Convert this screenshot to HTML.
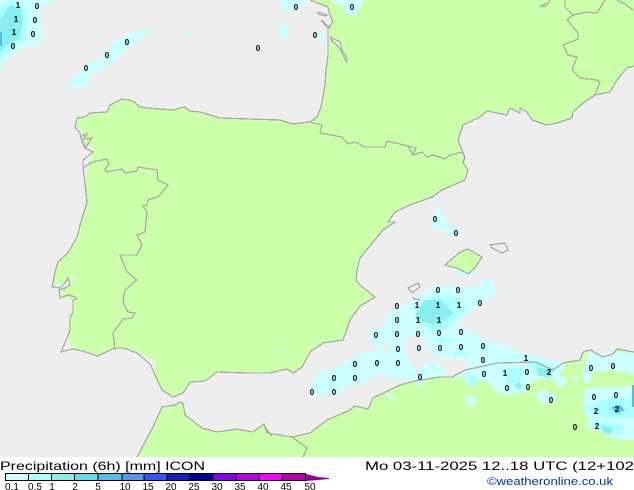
<!DOCTYPE html>
<html><head><meta charset="utf-8"><style>
html,body{margin:0;padding:0;background:#fff;width:634px;height:490px;overflow:hidden}
svg{display:block}
text{font-family:"Liberation Sans",sans-serif}
.m text{font-size:8px;font-weight:bold;text-anchor:middle;fill:#000}
.l text{font-size:10px;text-anchor:middle;fill:#000}
</style></head><body>
<svg width="634" height="490" viewBox="0 0 634 490" xmlns="http://www.w3.org/2000/svg">
<rect width="634" height="490" fill="#fff"/>
<rect width="634" height="457" fill="#eeeeee"/>
<g shape-rendering="crispEdges">
<!-- land -->
<g fill="#ccffaa">
<polygon points="310,0 634,0 634,66 627,68 617,80 610,92 595,95 583,103 573,112 572,118 557,123 547,125 532,120 527,112 520,108 520,113 510,108 507,115 487,111 480,117 463,125 458,140 462,150 465,157 463,163 468,170 465,180 442,190 432,197 410,205 395,212 388,222 395,222 383,230 360,258 357,270 356,280 360,285 375,297 360,306 350,320 346,332 343,340 323,343 310,352 302,367 293,373 287,369 270,373 247,373 217,372 205,381 190,382 183,393 173,397 162,390 153,378 157,362 132,350 137,353 123,348 113,350 97,356 85,351 72,349 70,340 68,320 73,305 73,300 60,298 59,290 68,287 70,284 77,275 63,282 52,287 55,272 58,262 68,253 77,237 82,218 87,203 85,183 90,160 93,152 94,148 85,145 82,130 75,127 77,118 85,117 90,113 107,112 110,105 122,99 133,101 140,107 147,108 173,110 184,107 190,111 200,112 220,118 280,120 292,124 310,122 317,117 321,107 325,85 328,55 328,36 328,28 333,22 331,18 328,7"/>
<polygon points="137,457 153,427 162,407 175,405 180,402 183,403 185,415 202,428 217,432 237,429 253,432 264,424 267,433 292,437 310,433 327,420 350,410 355,406 368,409 373,398 400,385 415,381 440,377 452,377 465,370 498,363 535,362 553,370 563,363 580,360 583,352 590,350 603,357 613,354 617,349 634,352 634,457"/>
<polygon points="445,265 460,252 468,249 482,257 475,268 468,274 457,268"/>
</g>
<polygon points="331,38 341,43 343,52 348,63 341,50 338,46" fill="#eeeeee"/>
<!-- lightest precip -->
<g fill="#ccffff">
<polygon points="0,0 55,0 40,7 43,33 42,43 20,50 3,63 0,73"/>
<polygon points="63,92 68,85 73,78 87,65 103,57 113,42 130,33 147,28 153,32 140,40 128,48 117,60 93,73 83,90 75,88 72,83 65,93"/>
<polygon points="185,32 188,29 191,33 188,36"/>
<polygon points="280,0 306,0 305,7 285,12"/>
<polygon points="333,0 363,0 362,5 355,17 345,13 343,5 333,3"/>
<polygon points="280,23 288,24 290,32 283,40 280,38"/>
<polygon points="317,33 325,33 325,38 317,39"/>
<polygon points="430,228 432,216 440,206 443,215 448,225 455,225 460,233 455,238 445,230"/>
<polygon points="456,268 468,274 475,268 470,276 460,276"/>
<polygon points="370,328 383,328 389,313 410,302 415,297 425,294 433,285 457,287 477,287 482,280 492,280 497,293 492,297 473,310 463,318 457,328 467,330 487,340 510,347 527,355 540,357 567,363 560,373 568,383 560,387 550,378 537,380 530,383 525,393 507,395 497,393 490,383 480,380 473,388 467,383 460,377 447,376 440,376 425,379 421,389 417,382 413,380 387,378 380,372 367,383 343,388 340,395 310,395 310,387 318,373 333,370 350,360 362,353 375,353 376,348 370,337"/>
<polygon points="584,390 587,388 613,387 634,387 634,440 617,440 600,432 585,427 590,422 583,408"/>
<polygon points="465,397 470,395 476,400 474,406 468,406"/>
<polygon points="535,393 543,390 557,396 555,402 545,405 538,400"/>
<polygon points="572,378 576,375 579,379 575,382"/>
<polygon points="583,368 586,365 588,350 600,357 613,354 620,352 634,353 634,376 625,372 606,370 592,373 590,383 584,383"/>
<polygon points="278,349 280,352 277,354 275,351"/>
<polygon points="387,395 391,393 394,397 390,400"/>
</g>
<!-- gaps in rain over sea -->
<g fill="#eeeeee">
<polygon points="402,341 413,335 423,338 432,353 440,359 450,358 467,360 468,368 463,372 447,377 438,370 427,362 423,367 417,373 408,357 404,353 403,345"/>
<polygon points="382,345 390,342 392,353 384,353"/>
</g>
<g fill="#ccffff">
<polygon points="426,362 437,363 447,373 437,377 428,375"/>
<polygon points="415,347 422,346 423,352 416,353"/>
</g>
<!-- mid precip -->
<g fill="#aaffff">
<polygon points="0,8 13,0 25,7 27,20 25,40 13,47 0,60"/>
<polygon points="415,317 423,302 440,295 458,298 467,312 443,328 435,335 427,328"/>
<polygon points="438,337 457,340 455,342 440,343"/>
<polygon points="452,352 467,351 468,354 455,355"/>
<polygon points="503,368 520,368 527,372 515,387 507,383"/>
<polygon points="530,357 543,363 557,368 550,378 537,375 530,367"/>
<polygon points="468,375 478,378 474,387 470,386"/>
<polygon points="583,408 597,402 617,397 634,400 634,418 617,418 600,417"/>
<polygon points="590,424 600,420 625,426 620,436 606,432"/>
</g>
<!-- darker precip -->
<g fill="#88eeee">
<polygon points="0,20 10,5 22,10 22,25 20,38 8,44 0,52"/>
<polygon points="415,315 425,300 440,300 453,313 437,325 420,322"/>
<polygon points="537,367 550,370 553,375 547,378 538,375"/>
<polygon points="515,385 519,381 522,387 518,390"/>
<polygon points="608,408 617,405 627,410 617,415"/>
<polygon points="600,425 612,428 610,435 604,433"/>
</g>
<g fill="#55bbee">
<rect x="0" y="32" width="2" height="14"/>
<rect x="632" y="385" width="2" height="22"/>
<polygon points="612,407 620,405 624,410 616,413"/>
</g>
<!-- coast and borders -->
<g fill="none" stroke="#aaaaaa" stroke-width="1.3">
<polyline points="310,0 328,7 331,18 333,22 328,28 328,36 328,55 326,70 325,85 321,107 317,117 310,122 292,124 280,120 220,118 200,112 190,111 184,107 173,110 147,108 140,107 133,101 122,99 110,105 107,112 90,113 85,117 77,118 75,127 80,133 82,142 85,148 93,152 83,160 83,168 85,183 87,203 82,218 77,237 68,253 58,262 55,272 52,287 60,288 65,283 68,278 70,285 65,288 59,290 60,298 68,295 75,297 77,299 73,300 73,313 70,317 70,330 67,338 61,352 72,349 83,351 97,356 115,348 123,348 137,353 150,364 162,390 173,397 183,393 190,382 205,381 217,372 247,373 270,373 287,369 293,373 302,367 310,352 323,343 343,340 346,332 350,320 360,306 375,297 360,285 356,280 357,270 360,258 383,230 395,222 388,222 395,212 410,205 432,197 442,190 465,180 468,170 463,163 465,157 462,150 458,140 463,125 480,117 487,111 507,115 510,108 520,113 520,108 527,112 532,120 547,125 557,123 572,118 573,112 583,103 595,95 610,92 617,80 627,68 634,66"/>
<polyline points="330,37 340,42 342,50 347,58 347,63 342,53 339,47 330,39"/>
<polyline points="318,12 327,15 325,16 318,14 318,12"/>
<polyline points="322,20 328,27 331,28 326,26 321,20"/>
<polyline points="310,122 322,125 320,133 342,137 348,144 355,142 365,147 385,147 387,141 408,146 413,155 422,152 427,157 433,155 445,159 450,155 462,152 465,157"/>
<polyline points="413,155 416,148 408,146"/>
<polyline points="83,168 92,162 107,159 109,164 105,169 107,172 122,169 125,173 137,171 138,167 157,170 158,180 168,185 158,197 148,200 147,205 143,206 147,212 145,232 137,235 142,245 137,255 120,255 127,272 137,280 125,290 123,302 128,312 135,313 132,318 123,319 113,333 115,350"/>
<polyline points="80,137 87,134 82,142 86,147 92,138 86,139"/>
<polyline points="137,457 153,427 162,407 175,405 180,402 183,403 185,415 202,428 217,432 237,429 253,432 264,424 267,433 292,437 310,433 327,420 350,410 355,406 368,409 373,398 400,385 415,381 440,377 452,377 465,370 498,363 535,362 553,370 563,363 580,360 583,352 590,350 603,357 613,354 617,349 634,352"/>
<polyline points="264,424 267,430 272,436"/>
<polyline points="292,437 307,448 303,457"/>
<polygon points="445,265 460,252 468,249 482,257 475,268 468,274 457,268"/>
<polygon points="490,245 505,243 508,250 502,253 492,248"/>
<polygon points="408,288 418,283 420,287 412,293"/>
<polyline points="413,297 414,299 420,300"/>
<polyline points="565,0 565,7 573,15 567,20 578,33 578,39 563,45 568,55 577,57 572,70 580,78 597,80 600,82 595,95"/>
<polyline points="573,15 587,12 597,13 605,0"/>
<polyline points="617,0 625,4 633,10"/>
<polyline points="550,0 546,6 540,7 546,3"/>
</g>
</g>
<g class="m">
<text x="18" y="8">1</text><text x="37" y="9">0</text><text x="16" y="22">1</text><text x="35" y="23">0</text><text x="14" y="35">1</text><text x="33" y="37">0</text><text x="13" y="49">0</text>
<text x="86" y="71">0</text><text x="107" y="58">0</text><text x="127" y="45">0</text><text x="258" y="51">0</text>
<text x="296" y="10">0</text><text x="352" y="10">0</text><text x="315" y="38">0</text>
<text x="435" y="222">0</text><text x="456" y="236">0</text><text x="438" y="293">0</text><text x="458" y="293">0</text>
<text x="397" y="309">0</text><text x="417" y="308">1</text><text x="438" y="308">1</text><text x="459" y="308">1</text><text x="480" y="306">0</text>
<text x="397" y="323">0</text><text x="418" y="323">1</text><text x="439" y="323">1</text>
<text x="376" y="338">0</text><text x="397" y="337">0</text><text x="418" y="337">0</text><text x="439" y="336">0</text><text x="461" y="335">0</text>
<text x="398" y="352">0</text><text x="419" y="351">0</text><text x="440" y="351">0</text><text x="461" y="350">0</text><text x="483" y="349">0</text>
<text x="355" y="367">0</text><text x="377" y="366">0</text><text x="398" y="366">0</text><text x="483" y="363">0</text><text x="526" y="361">1</text>
<text x="334" y="381">0</text><text x="355" y="381">0</text><text x="420" y="380">0</text><text x="484" y="377">0</text><text x="505" y="376">1</text><text x="527" y="375">0</text><text x="549" y="375">2</text><text x="591" y="371">0</text><text x="613" y="369">0</text>
<text x="312" y="395">0</text><text x="334" y="395">0</text><text x="507" y="391">0</text><text x="528" y="390">0</text><text x="551" y="403">0</text><text x="594" y="400">0</text><text x="616" y="398">0</text>
<text x="596" y="414">2</text><text x="617" y="412">2</text><text x="597" y="429">2</text><text x="575" y="430">0</text>
</g>
<!-- footer -->
<text x="0" y="470" font-size="12" textLength="205" lengthAdjust="spacingAndGlyphs" fill="#000">Precipitation (6h) [mm] ICON</text>
<text x="365" y="470" font-size="12" textLength="269" lengthAdjust="spacingAndGlyphs" fill="#000">Mo 03-11-2025 12..18 UTC (12+102</text>
<text x="487" y="485" font-size="11" textLength="126" lengthAdjust="spacingAndGlyphs" fill="#003399">©weatheronline.co.uk</text>
<g shape-rendering="crispEdges" stroke="#000" stroke-width="1">
<rect x="5.5" y="473.5" width="23" height="7" fill="#ccffff"/>
<rect x="28.5" y="473.5" width="23" height="7" fill="#aaffff"/>
<rect x="51.5" y="473.5" width="23" height="7" fill="#88eeee"/>
<rect x="74.5" y="473.5" width="23.500" height="7" fill="#66ddee"/>
<rect x="98" y="473.5" width="24" height="7" fill="#55bbee"/>
<rect x="122" y="473.5" width="22" height="7" fill="#5599ee"/>
<rect x="144" y="473.5" width="23" height="7" fill="#3355ff"/>
<rect x="167" y="473.5" width="23" height="7" fill="#1122bb"/>
<rect x="190" y="473.5" width="23" height="7" fill="#000099"/>
<rect x="213" y="473.5" width="23" height="7" fill="#8800ee"/>
<rect x="236" y="473.5" width="23" height="7" fill="#bb00ee"/>
<rect x="259" y="473.5" width="23" height="7" fill="#ff00ff"/>
<rect x="282" y="473.5" width="23.500" height="7" fill="#bb00aa"/>
</g>
<polygon points="306,474 318,477 329,478 329,479 318,480 306,481" fill="#990099"/>
<g class="l">
<text x="12" y="490">0.1</text><text x="35" y="490">0.5</text><text x="52" y="490">1</text><text x="75" y="490">2</text><text x="98" y="490">5</text><text x="125" y="490">10</text><text x="148" y="490">15</text><text x="171" y="490">20</text><text x="194" y="490">25</text><text x="217" y="490">30</text><text x="240" y="490">35</text><text x="263" y="490">40</text><text x="286" y="490">45</text><text x="310" y="490">50</text>
</g>
</svg>
</body></html>
